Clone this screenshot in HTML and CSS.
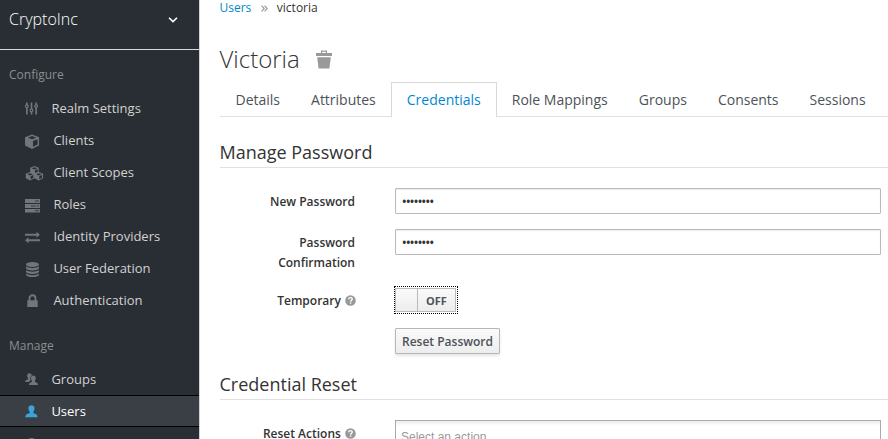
FILE: index.html
```html
<!DOCTYPE html>
<html lang="en">
<head>
<meta charset="utf-8">
<title>Victoria</title>
<link rel="stylesheet" href="styles.css">
</head>
<body>
<div class="page">
  <aside class="sidebar">
    <div class="realm"><span>CryptoInc</span>
      <svg class="chevron" width="10" height="6" viewBox="0 0 10 6"><path d="M1 .7 5 4.6 9 .7" fill="none" stroke="#fff" stroke-width="1.6"/></svg>
    </div>
    <h2 class="nav-title">Configure</h2>
    <ul class="nav">
      <li class="narrow"><svg viewBox="0 0 14 14"><path d="M2 .5v13M7 .5v13M12 .5v13" stroke="currentColor" stroke-width="1.8"/><g fill="#292e34" stroke="currentColor" stroke-width="1.3"><circle cx="2" cy="4.500" r="1.500"/><circle cx="7" cy="9" r="1.500"/><circle cx="12" cy="4.500" r="1.500"/></g></svg><span>Realm Settings</span></li>
      <li><svg viewBox="0 0 16 16"><path fill="currentColor" fill-rule="evenodd" d="M7.500.5 15 3.400v8.900L7.500 16 0 12.300V3.400zM7.500 2 3 3.900l4.500 1.800L12 3.900zM8.500 7.400v6.200l4.900-2.500V5.500z"/></svg><span>Clients</span></li>
      <li><svg class="wide" viewBox="0 0 19 16"><path fill="currentColor" fill-rule="evenodd" d="M9.500 0 14 1.800V6.300L18.700 8.300v4.800l-4.600 2.300-4.700-2.300-4.700 2.300L.2 13.100V8.300L4.900 6.300V1.800zM9.500 1.200 6.600 2.400l2.900 1.200 2.900-1.200zM10 4.600v2.800l3-1.200V3.400zM4.800 7.600 1.900 8.800 4.800 10l2.900-1.200zM5.300 11v3l3-1.500V9.700zM14.100 7.600l-2.900 1.200 2.900 1.200L17 8.800zM14.600 11v3l3-1.500V9.700z"/></svg><span>Client Scopes</span></li>
      <li><svg viewBox="0 0 15 15"><path fill="currentColor" d="M0 1h15v4H0zM0 6h15v4H0zM0 11h15v3.500H0z"/><path d="M10 3h4M6 8h5M12 8h2M10 12.700h4" stroke="#292e34" stroke-width=".8"/></svg><span>Roles</span></li>
      <li><svg viewBox="0 0 15 15"><path fill="currentColor" d="M0 3.700h11.500V1.800l3.500 3-3.500 3V5.800H0zM15 9.200H3.500V7.300L0 10.300l3.500 3v-2H15z"/></svg><span>Identity Providers</span></li>
      <li><svg viewBox="0 0 15 15"><g fill="currentColor"><ellipse cx="7.500" cy="2.600" rx="6.500" ry="2.500"/><path d="M1 4.200c2 2.300 11 2.300 13 0v2c-1 3-12 3-13 0zM1 7.900c2 2.300 11 2.300 13 0v1.900c-1 3-12 3-13 0zM1 11.500c2 2.300 11 2.300 13 0v1.400c-1 2.800-12 2.800-13 0z"/></g></svg><span>User Federation</span></li>
      <li><svg viewBox="0 0 15 15"><path fill="currentColor" d="M2.300 6.300h10.400v6.700H2.300z"/><path d="M4.500 7V4.300a3 3 0 0 1 6 0V7" fill="none" stroke="currentColor" stroke-width="1.900"/></svg><span>Authentication</span></li>
    </ul>
    <h2 class="nav-title manage">Manage</h2>
    <ul class="nav">
      <li class="narrow groups"><svg viewBox="0 0 14 14"><g fill="currentColor"><path d="M4.600.2c2 0 2.800 1 2.600 2.400C5.700 3.700 5.400 6 6 8L3.800 9.700H.2c0-1.900 1.100-2.100 3.200-2.900V5.600C1.700 4 1.900.2 4.600.2z"/><path d="M9 2.600c2.800 0 3.200 3.200 1.700 5.900v1.300c2.200.7 3.200 1.200 3.200 3.200H4.300c0-2 1-2.500 3.100-3.200V8.500C5.900 5.800 6.300 2.600 9 2.600z"/></g></svg><span>Groups</span></li>
      <li class="narrow active"><svg viewBox="0 0 14 14"><path fill="currentColor" d="M7 .3c4 0 4 4.200 2 7v1.500c3.300.8 4.500 1.500 4.500 4.400H.3c0-2.900 1.400-3.600 4.700-4.400V7.300C3 4.500 3 .3 7 .3z"/></svg><span>Users</span></li>
      <li class="narrow"><svg viewBox="0 0 14 14"><circle cx="7" cy="7" r="5" fill="none" stroke="currentColor" stroke-width="2"/></svg></li>
    </ul>
  </aside>
  <main class="content">
    <nav class="breadcrumb"><a>Users</a><svg width="7" height="7" viewBox="0 0 7 7"><path d="M.6.6 3.200 3.500.6 6.400M3.600.6 6.200 3.500 3.600 6.400" fill="none" stroke="#9c9c9c" stroke-width="1.200"/></svg><span>victoria</span></nav>
    <h1>Victoria
      <svg width="16" height="19" viewBox="0 0 16 19"><path fill="#999" fill-rule="evenodd" d="M5 3V.5h6V3h5v3H0V3zM6.300 1.700V3h3.400V1.700zM1.200 7.200h13.600L13.400 18.500H2.600z"/></svg>
    </h1>
    <div class="tabs"><a>Details</a><a>Attributes</a><a class="on">Credentials</a><a>Role Mappings</a><a>Groups</a><a>Consents</a><a>Sessions</a></div>
    <h3>Manage Password</h3>
    <form>
      <div class="row"><label>New Password</label><input type="text" value="••••••••"></div>
      <div class="row confirm"><label>Password<br>Confirmation</label><input type="text" value="••••••••"></div>
      <div class="row temp"><label>Temporary <svg class="help" viewBox="0 0 11 11"><circle cx="5.500" cy="5.500" r="5.300" fill="#999"/><path d="M3.700 4.300C3.700 2 7.400 2.200 7.200 4.200 7.100 5.200 5.600 5.300 5.600 6.700M5.600 7.400v1.300" fill="none" stroke="#fff" stroke-width="1.400"/></svg></label><div class="switch"><span class="knob"></span><span class="off">OFF</span></div></div>
      <div class="row action"><label></label><button type="button">Reset Password</button></div>
    </form>
    <h3 class="second">Credential Reset</h3>
    <div class="row actions"><label>Reset Actions <svg class="help" viewBox="0 0 11 11"><circle cx="5.500" cy="5.500" r="5.300" fill="#999"/><path d="M3.700 4.300C3.700 2 7.400 2.200 7.200 4.200 7.100 5.200 5.600 5.300 5.600 6.700M5.600 7.400v1.300" fill="none" stroke="#fff" stroke-width="1.400"/></svg></label><div class="select">Select an action...</div></div>
  </main>
</div>
</body>
</html>
```
FILE: styles.css
```css
* { box-sizing: border-box; }
body { margin: 0; overflow: hidden; background: #fff; color: #333; font: 12px/20px "Open Sans", sans-serif; }
.page { display: flex; height: 439px; overflow: hidden; }
.sidebar { flex: none; width: 200px; background: #292e34; border-right: 1px solid #d1d1d1; overflow: hidden; }
.realm { height: 50px; border-bottom: 1px solid #d9d9d9; padding: 9px 21px 0 9px; display: flex; justify-content: space-between; color: #fff; font-size: 16px; font-weight: 300; }
.chevron { margin-top: 8px; }
h1, h2, h3 { margin: 0; font-weight: 400; }
.nav-title { margin: 15px 0 7px 9px; height: 20px; font-size: 12px; line-height: 20px; color: #8b8d8f; }
.nav-title.manage { margin: 20px 0 7px 9px; }
.nav { list-style: none; margin: 0; padding: 0; }
.nav li { height: 32px; padding-left: 25px; display: flex; align-items: center; color: #d1d1d1; font-size: 13px; }
.nav svg { flex: none; width: 15px; height: 15px; margin: 3px 13.4px 0 0; color: #72767b; }
.nav svg.wide { width: 19px; margin-right: 9.4px; }
.nav .narrow svg { width: 13px; height: 13px; margin: 0 13.4px 0 0; }
.nav .active { border-top: 1px solid #000; border-bottom: 1px solid #000; background: #393f44; color: #fff; }
.nav .active svg { color: #39a5dc; }
.content { flex: 1; min-width: 0; padding-left: 20px; }
.breadcrumb { height: 18px; display: flex; align-items: center; line-height: 16px; padding-bottom: 2px; margin-left: -.5px; }
.breadcrumb a { color: #0088ce; }
.breadcrumb svg { margin: 1px 8.5px 0 10px; }
h1 { height: 64px; margin-left: -.5px; padding-top: 28px; display: flex; font-size: 24px; line-height: 26px; font-weight: 300; }
h1 svg { margin: 4px 0 0 16.5px; }
.tabs { display: flex; height: 35px; border-bottom: 1px solid #e1e1e1; font-size: 14px; color: #4d5258; }
.tabs a { height: 35px; margin-right: -1px; padding: 7px 15px 0; border: 1px solid transparent; border-bottom: 0; line-height: 20px; white-space: nowrap; }
.tabs a:first-child { margin-left: -.5px; }
.tabs .on { color: #0088ce; background: #fff; border-color: #d9d9d9; }
h3 { height: 51px; padding-top: 23px; border-bottom: 1px solid #e1e1e1; font-size: 18px; line-height: 24px; text-indent: -.5px; }
form { padding-top: 20px; }
.row { display: flex; height: 41px; }
.row label { flex: none; width: 135px; margin-right: 40px; padding-top: 4px; text-align: right; font-weight: 600; line-height: 20px; white-space: nowrap; }
.row input { width: 486px; height: 26px; padding: 2px 6px; border: 1px solid #bababa; border-radius: 1px; box-shadow: inset 0 1px 1px rgba(0,0,0,.08); font: 600 12px "Open Sans", sans-serif; letter-spacing: -.6px; color: #333; outline: 0; }
.confirm { height: 57px; }
.help { width: 11px; height: 11px; margin-left: .5px; margin-right: -.5px; vertical-align: -1px; }
.switch { width: 64px; height: 28px; margin-left: -1px; padding: 1px; border: 1px dotted #000; display: flex; }
.switch span { border: 1px solid #bababa; background: linear-gradient(#fafafa, #ededed); }
.knob { width: 21px; margin-left: -1px; border-right: 0 !important; box-sizing: content-box !important; }
.switch .off { flex: 1; text-align: center; line-height: 23px; font-size: 11px; font-weight: 700; color: #4d5258; }
.temp { height: 42px; }
.temp label { padding-top: 5px; }
.action { height: 31px; }
button { width: 105px; height: 26px; padding: 0; border: 1px solid #b7b7b7; border-radius: 1px; background: linear-gradient(#fafafa, #ededed); box-shadow: 0 2px 3px rgba(3,3,3,.1); font: 600 12px "Open Sans", sans-serif; color: #4d5258; }
.second { height: 41px; padding-top: 13px; }
.actions { padding-top: 20px; height: 60px; }
.select { width: 486px; height: 34px; padding: 7px 5px; border: 1px solid #aaa; background: linear-gradient(#eee 1%, #fff 15%); font: 12px/19px "Liberation Sans", sans-serif; color: #999; }
```
